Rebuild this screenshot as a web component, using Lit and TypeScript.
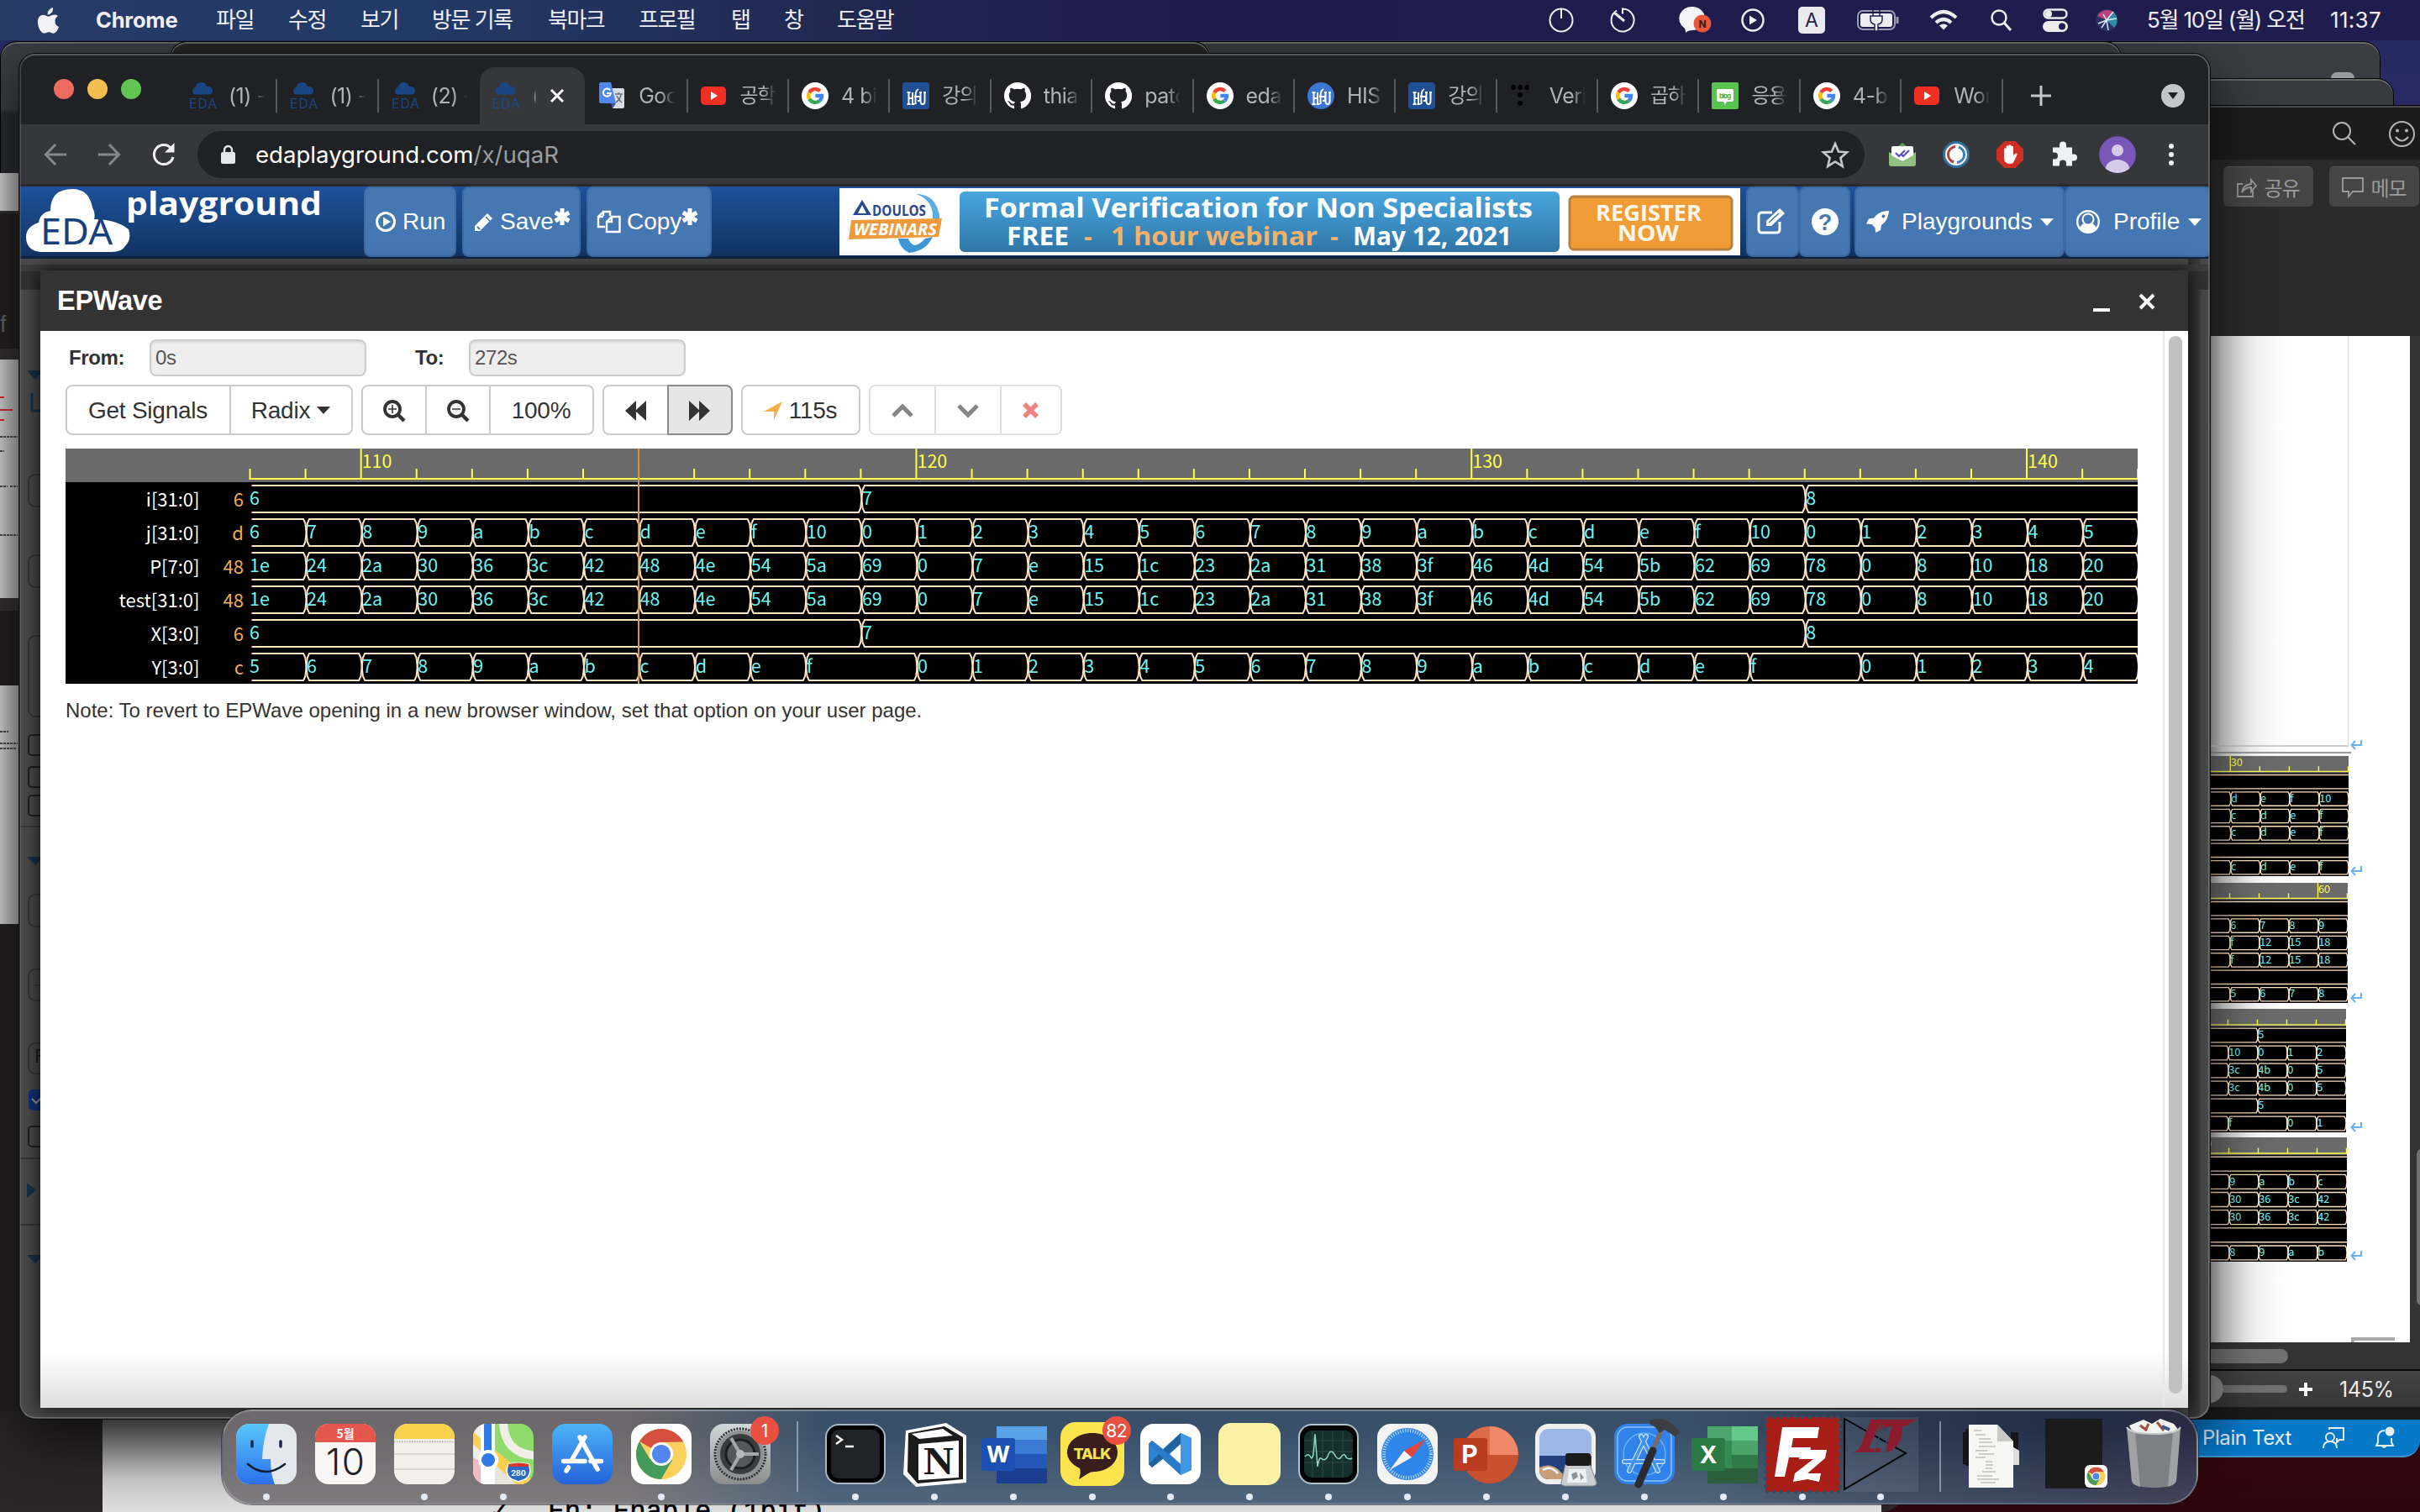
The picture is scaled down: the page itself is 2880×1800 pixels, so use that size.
import { LitElement, html, svg, css, nothing, TemplateResult } from "lit";
import { customElement, property } from "lit/decorators.js";

/* ---------- shared waveform drawing ---------- */

interface WaveRow {
  name?: string;
  value?: string;
  cells: string; // space separated, "." keeps the previous value
}

const PITCH = 66.08;

function waveRow(row: WaveRow, index: number, x0: number, right: number, lw: number, fs: number) {
  const cells = row.cells.split(" ");
  const top = 44 + index * 40;
  const mid = top + 16;
  const bot = top + 32;
  const parts: TemplateResult[] = [];
  let i = 0;
  while (i < cells.length) {
    let j = i + 1;
    while (j < cells.length && cells[j] === ".") j++;
    const a = x0 + i * PITCH + 1;
    const b = x0 + j * PITCH + 1;
    const first = i === 0;
    const last = j === cells.length && j - i > 2;
    const l = first ? `M${a + 1} ${top}` : `M${a} ${mid}L${a + 1.2} ${top + 5}L${a + 3.5} ${top}`;
    const r = last ? `H${right}` : `H${b - 3.5}L${b - 1.2} ${top + 5}L${b} ${mid}`;
    const l2 = first ? `M${a + 1} ${bot}` : `M${a} ${mid}L${a + 1.2} ${bot - 5}L${a + 3.5} ${bot}`;
    const r2 = last ? `H${right}` : `H${b - 3.5}L${b - 1.2} ${bot - 5}L${b} ${mid}`;
    parts.push(svg`<path d="${l}${r}${l2}${r2}" fill="none" stroke="#ffe4c4" stroke-width=${lw}></path>
      <text x=${first ? a - 1.5 : a + 0.5} y=${top + 23} font-size=${fs} fill="#6ff5f5">${cells[i]}</text>`);
    i = j;
  }
  return parts;
}

function ruler(x0: number, count: number, labels: Record<number, string>, right: number, lw: number, fs: number) {
  const ticks = [];
  for (let i = 0; i <= count; i++) {
    const x = x0 + i * PITCH;
    const label = labels[i];
    ticks.push(svg`<path d="M${x} ${label ? 0 : 24}V37" stroke="#ffff4b" stroke-width=${lw}></path>
      ${label ? svg`<text x=${x + 1} y="23" font-size=${fs} fill="#ffff4b">${label}</text>` : nothing}`);
  }
  return svg`<rect width=${right} height="40" fill="#6a6a6a"></rect>
    <path d="M${x0 - 1} 36H${right}" stroke="#ffff4b" stroke-width=${lw}></path>${ticks}`;
}

@customElement("wave-view")
class WaveView extends LitElement {
  @property({ attribute: false }) rows: WaveRow[] = [];
  @property({ attribute: false }) labels: Record<number, string> = {};
  @property({ type: Number }) x0 = 219.5;
  @property({ type: Number }) full = 2466;
  @property({ type: Number }) lw = 2;
  @property({ type: Number }) fs = 21.5;
  @property({ type: Number }) cursor = 0;
  @property({ type: Number }) count = 34;

  static styles = css`
    :host { display: block; }
    svg { display: block; width: 100%; height: 100%; background: #000; }
    text { font-family: "Noto Sans CJK KR", sans-serif; }
  `;

  render() {
    return html`<svg viewBox="0 0 ${this.full} 280" preserveAspectRatio="none">
      ${ruler(this.x0, this.count, this.labels, this.full, this.lw, this.fs)}
      ${this.rows.map((r, i) => svg`
        ${r.name ? svg`<text x="159.500" y=${68.5 + i * 40} font-size="22" text-anchor="end" fill="#fff">${r.name}</text>` : nothing}
        ${r.value ? svg`<text x="212" y=${68.5 + i * 40} font-size="22" text-anchor="end" fill="#f0ad4e">${r.value}</text>` : nothing}
        ${waveRow(r, i, this.x0, this.full, this.lw, this.fs)}`)}
      ${this.cursor ? svg`<path d="M${this.cursor} 0V280" stroke="#d9963a" stroke-width="2"></path>` : nothing}
    </svg>`;
  }
}

const hold = (v: string, n: number) => v + " .".repeat(n - 1);
const P_CELLS = "1e 24 2a 30 36 3c 42 48 4e 54 5a 69 0 7 e 15 1c 23 2a 31 38 3f 46 4d 54 5b 62 69 78 0 8 10 18 20";
const I_CELLS = `${hold("6", 11)} ${hold("7", 17)} ${hold("8", 6)}`;
const MAIN_ROWS: WaveRow[] = [
  { name: "i[31:0]", value: "6", cells: I_CELLS },
  { name: "j[31:0]", value: "d", cells: "6 7 8 9 a b c d e f 10 0 1 2 3 4 5 6 7 8 9 a b c d e f 10 0 1 2 3 4 5" },
  { name: "P[7:0]", value: "48", cells: P_CELLS },
  { name: "test[31:0]", value: "48", cells: P_CELLS },
  { name: "X[3:0]", value: "6", cells: I_CELLS },
  { name: "Y[3:0]", value: "c", cells: "5 6 7 8 9 a b c d e f . 0 1 2 3 4 5 6 7 8 9 a b c d e f . 0 1 2 3 4" },
];

const strip = (i: string, j: string, p: string, y: string): WaveRow[] =>
  [i, j, p, p, i, y].map((cells) => ({ cells }));
const STRIPS = [
  { cls: "s1", labels: { 1: "30" }, full: 443, rows: strip("1 . . . .", "c d e f 10", "b c d e f", "b c d e f") },
  { cls: "s2", labels: { 4: "60" }, full: 442, rows: strip("3 . . . .", "5 6 7 8 9", "c f 12 15 18", "4 5 6 7 8") },
  { cls: "s3", labels: {}, full: 438, rows: strip("4 . 5 . .", "f 10 0 1 2", "36 3c 4b 0 5", "e f . 0 1") },
  { cls: "s4", labels: { 0: "10" }, full: 440, rows: strip("6 . . . .", "8 9 a b c", "2a 30 36 3c 42", "7 8 9 a b") },
];

/* ---------- icons ---------- */

const ic = (w: number, h: number, body: TemplateResult, vb = `0 0 ${w} ${h}`) =>
  html`<svg width=${w} height=${h} viewBox=${vb} style="display:block;overflow:visible;flex:none">${body}</svg>`;

const googleG = svg`<circle cx="16" cy="16" r="16" fill="#fff"/>
  <g fill="none" stroke-width="4.4"><path d="M9.2 12.1A8 8 0 0 1 21.8 10.4" stroke="#ea4335"/><path d="M9.2 12.1A8 8 0 0 0 9.2 19.9" stroke="#fbbc05"/><path d="M9.2 19.9A8 8 0 0 0 21 22.2" stroke="#34a853"/><path d="M21 22.2A8 8 0 0 0 24 16H16.4" stroke="#4285f4"/></g>`;
const edaFav = svg`<path d="M7 14.5q-3-1-3-4 0-3.500 4-4.500Q8.500 0 14 0q5.500 0 7 5 7 0 7 5 0 4-4 4.500z" fill="#1b4684"/>
  <text x="0" y="31" font-family="Inter, sans-serif" font-size="15.500" textLength="33" fill="#1b4684">EDA</text>`;
const youtube = svg`<rect y="5" width="30" height="22" rx="5" fill="#f03022"/><path d="M12 11v10l8-5z" fill="#fff"/>`;
const crest = (round: boolean) => svg`<rect width="32" height="32" rx=${round ? 16 : 4} fill=${round ? "#3a76d2" : "#1f5094"}/>
  <g fill="none" stroke="#fff" stroke-width="2"><path d="M7.500 12v14M12 12v14M7.500 19h4.500M5.500 12h4M5.500 26h4M10.500 26h4M19 8q-3.500 2-3.500 8v10M14 17h7v5h-3M21.500 12v10q0 4 2.500 4t2.500-4V12M20 12h3M25 12h3"/></g>`;
const github = svg`<path fill="#fff" d="M16 0a16 16 0 0 0-5 31.200c.8.100 1.100-.4 1.100-.8v-3c-4.500 1-5.400-1.900-5.400-1.900-.7-1.800-1.800-2.300-1.800-2.300-1.400-1 .1-1 .1-1 1.600.1 2.500 1.700 2.500 1.700 1.400 2.400 3.700 1.700 4.600 1.300.2-1 .6-1.700 1-2.100-3.600-.4-7.300-1.800-7.300-7.900 0-1.700.6-3.200 1.700-4.300-.2-.4-.7-2 .1-4.200 0 0 1.400-.4 4.400 1.600a15 15 0 0 1 8 0c3-2 4.400-1.600 4.400-1.600.9 2.200.3 3.800.2 4.200 1 1.100 1.600 2.600 1.600 4.300 0 6.200-3.700 7.500-7.300 7.900.6.500 1.100 1.500 1.100 3v4.300c0 .4.300.9 1.100.8A16 16 0 0 0 16 0z"/>`;
const translate = svg`<path d="M12 7h16a2 2 0 0 1 2 2v20a2 2 0 0 1-2 2H16z" fill="#d8dce2"/><path d="M0 2a2 2 0 0 1 2-2h12l6 25H2a2 2 0 0 1-2-2z" fill="#5087ec"/><path d="M14 25h6l-4 6z" fill="#3850b0"/><path d="M13.300 9.500A4.600 4.600 0 1 0 14 13h-5" fill="none" stroke="#fff" stroke-width="2"/><path d="M19 14h9M23.500 12v2M26 15q-1 5-6 9M21 16q2 5 6 8" stroke="#66707c" stroke-width="1.500" fill="none"/>`;
const dotsT = svg`<g fill="#000"><circle cx="4" cy="6" r="3"/><circle cx="12" cy="6" r="3"/><circle cx="20" cy="6" r="3"/><circle cx="12" cy="15" r="3"/><circle cx="12" cy="25" r="3"/></g>`;
const blog = svg`<rect width="32" height="32" rx="2" fill="#5ac24e"/><path d="M8 8h16q2 0 2 2v11q0 2-2 2h-6l-2 4-2-4H8q-2 0-2-2V10q0-2 2-2z" fill="#fff"/><text x="9" y="18.500" font-family="Inter" font-weight="700" font-size="8" textLength="14" fill="#4cae42">blog</text>`;
const star6 = ic(18, 20, svg`<path d="M9 0v20M.8 5l16.400 10M17.200 5 .8 15" stroke="#fff" stroke-width="5"/>`);

const caret = ic(16, 9, svg`<path d="M0 0h16l-8 9z" fill="currentColor"/>`);
const chromeLogo = svg`<circle cx="36" cy="36" r="30" fill="#fbd05c"/>
  <path d="M36 36 10 21A30 30 0 0 1 62 21L62 22H36z" fill="#d5503f"/><path d="M10 21a30 30 0 0 0 26 45L49.500 43 36 36 22.500 42z" fill="#459b5b"/><path d="M62 21.500A30 30 0 0 1 36 66L49 43.500 36 22z" fill="#fbd05c"/><circle cx="36" cy="36" r="14" fill="#fff"/><circle cx="36" cy="36" r="11" fill="#5286ec"/>`;

interface Tab { icon: TemplateResult; text: string; active?: boolean; sep?: boolean; ko?: boolean }
const TABS: Tab[] = [
  { icon: edaFav, text: "(1) -", sep: true },
  { icon: edaFav, text: "(1) -", sep: true },
  { icon: edaFav, text: "(2) -" },
  { icon: edaFav, text: "(", active: true },
  { icon: translate, text: "Goo", sep: true },
  { icon: youtube, text: "공학", sep: true, ko: true },
  { icon: googleG, text: "4 bi", sep: true },
  { icon: crest(false), text: "강의", sep: true, ko: true },
  { icon: github, text: "thia", sep: true },
  { icon: github, text: "patc", sep: true },
  { icon: googleG, text: "eda", sep: true },
  { icon: crest(true), text: "HIS", sep: true },
  { icon: crest(false), text: "강의", sep: true, ko: true },
  { icon: dotsT, text: "Veri", sep: true },
  { icon: googleG, text: "곱하", sep: true, ko: true },
  { icon: blog, text: "응용", sep: true, ko: true },
  { icon: googleG, text: "4-b", sep: true },
  { icon: youtube, text: "Wor", sep: true },
];

/* ---------- dock icons (72 x 72) ---------- */

const tile = (fill: string) => svg`<rect width="72" height="72" rx="16" fill=${fill}/>`;
const DOCK_A: { art: TemplateResult; dot?: boolean; badge?: string }[] = [
  { dot: true, art: svg`<rect width="72" height="72" rx="16" fill="#e3e7ee"/><path d="M16 0H39Q32 18 31 42H41Q41 60 46 72H16A16 16 0 0 1 0 56V16A16 16 0 0 1 16 0z" fill="url(#gBlue)"/><path d="M19 21v6M53 21v6" stroke="#1b2a44" stroke-width="3.500" stroke-linecap="round"/><path d="M14 48q21 18 44 0" fill="none" stroke="#14202e" stroke-width="2.600" stroke-linecap="round"/>` },
  { art: svg`${tile("#f8f7f5")}<path d="M0 22V16A16 16 0 0 1 16 0H56A16 16 0 0 1 72 16V22z" fill="#e5574c"/><text x="36" y="17" text-anchor="middle" font-family="Noto Sans CJK KR" font-weight="700" font-size="14" fill="#fff">5월</text><text x="36" y="61" text-anchor="middle" font-family="Inter" font-weight="300" font-size="44" textLength="46" fill="#222">10</text>` },
  { dot: true, art: svg`${tile("#f1f0ec")}<path d="M0 18V16A16 16 0 0 1 16 0H56A16 16 0 0 1 72 16V18z" fill="#f9d14c"/><path d="M0 21.500H72" stroke="#b0ada6" stroke-width="1.500" stroke-dasharray="1.500 1.500"/><path d="M0 36H72M0 54H72" stroke="#cfcdc8" stroke-width="1.500"/>` },
  { dot: true, art: svg`<clipPath id="mc"><rect width="72" height="72" rx="16"/></clipPath><g clip-path="url(#mc)"><rect width="72" height="72" fill="#8fdc6c"/><path d="M0 0h12v72H0z" fill="#efeeea"/><path d="M0 40l14 8v24H0z" fill="#f3b8c4"/><path d="M26 42l46 30H26z" fill="#e7e4dc"/><path d="M0 10 72 68V80H60L0 24z" fill="#fbce4e"/><path d="M36-4q0 40 40 42" fill="none" stroke="#f0eee6" stroke-width="10"/><path d="M9 0h17v72H9z" fill="#fff"/><path d="M13 0h9v42h-9z" fill="#2f7be8"/><circle cx="18" cy="43" r="12" fill="#fff"/><circle cx="18" cy="43" r="8" fill="#2f7be8"/></g><path d="M42 48q12-3 24 0 5 12-4 18l-8 3-8-3q-9-6-4-18z" fill="#2b6ac4" stroke="#fff" stroke-width="1.500"/><path d="M42 48q12-3 24 0v3H42z" fill="#d9372c"/><text x="54" y="62" text-anchor="middle" font-family="Inter" font-weight="700" font-size="9" fill="#fff">280</text>` },
  { art: svg`${tile("url(#gStore)")}<g stroke="#fff" stroke-width="5.500" stroke-linecap="round"><path d="M39 16 24 42M33 16 54 54M13.500 44.500H39M46 44.500H58.500M19.500 52 17 56"/></g>` },
  { dot: true, art: svg`${tile("#fff")}${chromeLogo}` },
  { badge: "1", art: svg`${tile("url(#gGray)")}<circle cx="36" cy="36" r="30" fill="none" stroke="#2b2d2f" stroke-width="3" stroke-dasharray="2 1.500"/><circle cx="36" cy="36" r="26" fill="#3a3c3e" stroke="#8d9194" stroke-width="4"/><circle cx="36" cy="36" r="17" fill="#55585a" stroke="#1d1e20" stroke-width="3"/><path d="M36 36H58M36 36 25 17M36 36 25 55" stroke="#a4a8aa" stroke-width="4"/><circle cx="36" cy="36" r="5" fill="#b5b9bb"/>` },
];
const DOCK_B: { art: TemplateResult; dot?: boolean; badge?: string }[] = [
  { dot: true, art: svg`${tile("#aab8c4")}<rect x="2" y="2" width="68" height="68" rx="14" fill="#000"/><rect x="7" y="7" width="58" height="58" rx="9" fill="#222325"/><path d="M13 14l7 5-7 5M24 27h10" stroke="#fff" stroke-width="2.500" fill="none"/>` },
  { dot: true, art: svg`<path d="M2 8 50-1l24 15v56L14 75-1 60z" fill="#fff"/><path d="M5 11 48 3l22 13v50l-54 5L4 57z" fill="#1c1c1c"/><path d="M9 12 46 6l12 8-40 4z" fill="#fff"/><path d="M17 24l48-4v44l-48 3z" fill="#fff"/><text x="41" y="60" text-anchor="middle" font-family="Liberation Serif" font-weight="700" font-size="46" textLength="36" lengthAdjust="spacingAndGlyphs" fill="#1a1a1a">N</text>` },
  { dot: true, art: svg`<path d="M16 3H76V20H16z" fill="#5aa3e8"/><path d="M16 19H76V37H16z" fill="#3c7bd4"/><path d="M16 36H76V54H16z" fill="#2358b8"/><path d="M16 53H76V71H16z" fill="#1a3e90"/><rect x="-2" y="17" width="40" height="39" rx="3" fill="#1c50b4"/><text x="18" y="46" text-anchor="middle" font-family="Inter" font-weight="700" font-size="27" fill="#fff">W</text>` },
  { dot: true, badge: "82", art: svg`<rect x="-2" y="-2" width="76" height="76" rx="18" fill="#fbe44d"/><path d="M36 11c17 0 30 10 30 23S53 57 38 57c-5 0-8 3-18 9 2-6 2-10 1-13C12 49 6 42 6 34c0-13 13-23 30-23z" fill="#3a1d1d"/><text x="36" y="42" text-anchor="middle" font-family="Inter" font-weight="800" font-size="18" textLength="45" fill="#fbe44d">TALK</text>` },
  { dot: true, art: svg`${tile("#fff")}<path d="M48 11 61 17V55L48 61 27 42 14 52 10 48V24l4-4 13 10zM48 24 35 36 48 48z" fill="#2d86d3" fill-rule="evenodd"/><path d="M10 48 48 11v13L14 52z" fill="#22639f"/><path d="M10 24l4-4 34 28v13z" fill="#2a7cca"/><path d="M48 11 61 17V55L48 61z" fill="#3f97e6"/>` },
  { dot: true, art: svg`<rect x="-1" y="-1" width="74" height="74" rx="15" fill="#fbf1a4"/>` },
  { dot: true, art: svg`${tile("#b4c4cc")}<rect x="2" y="2" width="68" height="68" rx="14" fill="#000"/><rect x="7" y="8" width="58" height="56" rx="9" fill="#14302c"/><path d="M17 8v56M29 8v56M41 8v56M53 8v56M7 20h58M7 33h58M7 46h58" stroke="#2c4e47" stroke-width="1"/><path d="M8 39q4-5 7 1 1 3 3-3l2-25 3 39q2-12 4-10 6 5 9-5 3-6 7 0 3 7 7 5 5-8 7-1 3 3 7 1" fill="none" stroke="#8fd8c4" stroke-width="1.500"/>` },
  { dot: true, art: svg`${tile("#f3f3f3")}<circle cx="36" cy="36" r="31" fill="#2f86ea"/><circle cx="36" cy="36" r="28" fill="none" stroke="#cfe4fb" stroke-width="4" stroke-dasharray="1 2"/><path d="M58 18 41 40 32 32z" fill="#e5443b"/><path d="M15 55 32 32 41 40z" fill="#f3f3f3"/>` },
  { dot: true, art: svg`<circle cx="40" cy="37" r="34" fill="#c9512f"/><path d="M40 3a34 34 0 0 1 34 34H40z" fill="#f0886a"/><path d="M40 3a34 34 0 0 0-34 34H40z" fill="#dd6a48"/><rect x="-3" y="17" width="40" height="39" rx="3" fill="#b93b20"/><text x="16" y="47" text-anchor="middle" font-family="Inter" font-weight="700" font-size="30" fill="#fff">P</text>` },
  { dot: true, art: svg`${tile("#efefef")}<rect x="5" y="6" width="62" height="60" rx="11" fill="#9db8e6"/><path d="M5 38H67V55A11 11 0 0 1 56 66H16A11 11 0 0 1 5 55z" fill="#24407c"/><path d="M5 52q12-6 22 2l12 12H16A11 11 0 0 1 5 55z" fill="#c6a07c"/><path d="M9 55q10-6 18 4" stroke="#fff" stroke-width="2.500" fill="none"/><path d="M36 48h29l8 22q0 4-5 4H36q-5 0-5-4z" fill="#c9cdd0" stroke="#83888c"/><path d="M40 54h20l2 16H38z" fill="#edf1f4"/><path d="M43 60l6-3 2 6-6 4zM53 58l5 6-4 3z" fill="#8d949b"/><rect x="36" y="35" width="30" height="15" rx="3" fill="#1a1a1a"/>` },
  { dot: true, art: svg`${tile("#2f83ea")}<rect x="4" y="4" width="64" height="64" rx="12" fill="none" stroke="#8fc2f7" stroke-width="1.500"/><circle cx="36" cy="36" r="25" fill="none" stroke="#6db0f5" stroke-width="1.500"/><g stroke="#cbe3fb" stroke-width="6" stroke-linecap="round"><path d="M38 15 18 56M32 15 52 56M12 45H58"/></g><g stroke="#3f92ee" stroke-width="3.400" stroke-linecap="round"><path d="M38 15 18 56M32 15 52 56M12 45H58"/></g><path d="M56 8 46 32" stroke="#6b6e73" stroke-width="6"/><path d="M46 32 29 72" stroke="#2a2c2f" stroke-width="9" stroke-linecap="round"/><path d="M42-4q16-5 26 4l8 7 2 4-6 4-12-8-6 4-5-7q-4-2-7-4z" fill="#3b3d41"/>` },
  { dot: true, art: svg`<path d="M17 3H47V20H17z" fill="#4ca56c"/><path d="M46 3H77V20H46z" fill="#63c88a"/><path d="M17 20H47V54H17z" fill="#348a52"/><path d="M46 20H77V37H46z" fill="#4ba468"/><path d="M46 37H77V54H46z" fill="#2f7a46"/><path d="M17 53H77V71H17z" fill="#2a5f3a"/><rect x="-2" y="17" width="40" height="39" rx="3" fill="#2c7a43"/><text x="18" y="47" text-anchor="middle" font-family="Inter" font-weight="700" font-size="28" fill="#fff">X</text>` },
  { dot: true, art: svg`<rect x="-8" y="-8" width="89" height="89" fill="#a81e17"/><rect x="-8" y="-8" width="89" height="89" fill="none" stroke="#3d4a5e" stroke-width="4" stroke-dasharray="3.500 5"/><path d="M12 4H56L54 17H25L23 28H46L44 40H20L15 63H3z" fill="#fff"/><path d="M34 31H65L63 41 42 59H58L56 69 42 66 25 69 27 59 49 42H32z" fill="#fff"/>` },
  { dot: true, art: svg`<rect x="-7" y="-8" width="88" height="89" fill="#fff" opacity=".08"/><path d="M-7-6 66 35-7 78z" fill="none" stroke="#000" stroke-width="2"/><path d="M24-5H38L22 28Q24 31 34 28L37 34H4Q12 31 15 20z" fill="#8a1c2e"/><path d="M38-5H80Q72-2 66 3H62Q62 18 56 25 50 33 42 34L49 3Q41 3 34 9z" fill="#8a1c2e"/><path d="M40 1 28 34M48 3 40 34" stroke="#3d4a5e" stroke-width="1.500"/>` },
];
const DOCK_C: { art: TemplateResult }[] = [
  { art: svg`<path d="M-3 10h8v38h-8zM0 6h8v44H0z" fill="#161616"/><rect x="54" y="10" width="9" height="20" fill="#161616"/><path d="M54 26l10 6v17H54z" fill="#ddd"/><path d="M4 1H38L57 21V76H4z" fill="#f6f6f4"/><path d="M38 1v20h19z" fill="#c9c9c6"/><path d="M10 8h9M12 13h12M16 18h14M16 22h16M16 27h20M12 32h14M16 36h18M12 40h12M24 45h8M24 49h9M24 53h8M20 57h16M14 62h18M14 66h26M18 70h18" stroke="#c0c0bc" stroke-width="1.400"/>` },
  { art: svg`<rect x="1" y="-6" width="68" height="83" fill="#1b1b1b"/><rect x="48" y="49" width="27" height="27" rx="6" fill="#fff"/><g transform="translate(48.500 49.500) scale(.36)">${chromeLogo}</g>` },
  { art: svg`<path d="M7 2 24-5 34 0 44-6 60 0 66 8 40 16 12 12z" fill="#f2f2ee"/><path d="M20 2l8 6M40-2l8 10M30 0l-4 8" stroke="#a35040" stroke-width="3"/><path d="M46 3l9 4" stroke="#345a90" stroke-width="4"/><path d="M4 4 10 68q1 8 26 8t27-8L68 4q-8 8-32 8T4 4z" fill="#7c8082"/><path d="M4 4 10 68q1 5 10 7L14 9zM68 4 63 68q-2 5-10 7l6-66z" fill="#a9adae" opacity=".75"/><path d="M4 4q4 8 32 8T68 4" fill="none" stroke="#c8cbcc" stroke-width="2"/>` },
];

/* ---------- page ---------- */

@customElement("app-root")
class AppRoot extends LitElement {
  static styles = css`
    :host { display: block; position: relative; width: 2880px; height: 1800px; overflow: hidden;
      font-family: "Liberation Sans", "Noto Sans CJK KR", sans-serif;
      background: linear-gradient(180deg, #24285e 0, #2b2b66 150px, #31102c 1200px, #36070f 1700px, #2e060d 1800px); }
    * { box-sizing: border-box; }
    .layer { position: absolute; }
    .sys { font-family: Inter, "Noto Sans CJK KR", sans-serif; }

    .menubar { left: 0; top: 0; width: 2880px; height: 48px; display: flex; align-items: center; justify-content: space-between;
      background: linear-gradient(90deg, #263a66 0, #223a66 500px, #212850 1000px, #1f1c4c 1400px, #1f1d4d 2880px);
      color: #eeeef3; font-size: 26px; line-height: 1; padding: 0 37px 0 44px; z-index: 2; }
    .menus { display: grid; grid-template-columns: 70px 143px 86px 86px 85px 138px 108px 110px 63px 63px 80px; align-items: center; white-space: nowrap; letter-spacing: -1.500px; }
    .menus b { font-weight: 700; font-size: 25.500px; letter-spacing: -.2px; }
    .status { display: flex; align-items: center; white-space: nowrap; flex: none; }
    .cell { display: flex; justify-content: center; flex: none; }
    .date { width: 218px; flex: none; letter-spacing: -1.200px; } .time { width: 70px; flex: none; letter-spacing: .3px; }
    .sp { width: 35px; flex: none; }

    .win { border: 1px solid #000; box-shadow: inset 0 2px 0 #66686a; border-radius: 20px 20px 0 0; }
    .w1 { left: 0; top: 49px; width: 2833px; height: 200px; background: linear-gradient(#3a3e42 0 80px, #292b2f 86px); }
    .w2 { left: 1400px; top: 49px; width: 1125px; height: 100px; background: #3a3b3d; }
    .w3 { left: 202px; top: 49px; width: 1238px; height: 100px; background: #252525; }
    .w4 { left: 2300px; top: 93px; width: 549px; height: 100px; background: #373b3d; }
    .bump { left: 2774px; top: 86px; width: 28px; height: 7px; border-radius: 14px 14px 0 0; background: #999b9d; }

    .strip { left: 0; top: 206px; width: 24px; height: 1594px; display: flex; flex-direction: column; background: #252122; }
    .paper { background: linear-gradient(90deg, #d8d8d8, #a9a9a9); flex: none; }
    .bar { background: #353133; flex: none; }
    .dark { flex: none; background: #242021; color: #666; font-size: 27px; line-height: 32px; }

    .lower { left: 0; top: 1680px; width: 2268px; height: 120px; display: flex; background: #2a2628; border-radius: 0 0 30px 0; overflow: hidden; }
    .lower .sheet { margin-left: 122px; width: 2117px; background: linear-gradient(#555 0, #8d8d8d 30px, #c8c8c8 80px, #dedede 120px); padding: 99px 0 0 462px; display: flex; gap: 49px; font: 32.300px/44px "Liberation Mono", monospace; color: #000; white-space: pre; overflow: hidden; -webkit-text-stroke: .5px #000; }

    .word { left: 2560px; top: 125px; width: 330px; height: 1550px; background: #333; border: 1px solid #000; border-left: 0; box-shadow: inset 0 2px 0 #555; display: flex; flex-direction: column; }
    .wtitle { height: 64px; background: #1c1c1c; border-top: 2px solid #4d4d4d; display: flex; align-items: center; gap: 39px; padding-left: 216px; color: #b0b0b0; flex: none; }
    .wribbon { height: 210px; background: #2a2a2a; flex: none; display: flex; gap: 19px; padding: 8px 0 0 86px; }
    .wbtn { width: 107px; height: 48px; background: #454545; border-top: 1px solid #5a5a5a; border-radius: 6px; display: flex; align-items: center; justify-content: center; gap: 8px; font: 24px/1 "Noto Sans CJK KR", sans-serif; letter-spacing: -1px; color: #9b9b9b; flex: none; white-space: nowrap; }
    .wdoc { height: 1198px; width: 308px; flex: none; position: relative; background: linear-gradient(90deg, #a6a6a6 68px, #d9d9d9 84px, #f4f4f4 120px, #fff 165px); display: flex; flex-direction: column; }
    .frame { width: 235px; height: 489px; border-right: 1px solid #ddd; border-bottom: 2px solid #ccc; flex: none; }
    .frame2 { width: 238px; height: 8px; border-bottom: 2px solid #999; margin-bottom: 3px; flex: none; }
    .ret { position: absolute; left: 237px; }
    .s1 { width: 235px; height: 143px; } .s2 { width: 234px; height: 143px; margin-top: 8px; }
    .s3 { width: 232px; height: 147px; margin-top: 7px; } .s4 { width: 233px; height: 148px; margin-top: 6px; }
    .nub { margin: auto 0 0 238px; width: 52px; height: 6px; border-top: 4px solid #a8a8a8; border-left: 4px solid #a8a8a8; }
    .wside { position: absolute; left: 316px; top: 1242px; width: 12px; height: 186px; background: #707070; border-radius: 6px; }
    .hscroll { height: 32px; flex: none; display: flex; align-items: center; } .hscroll i { width: 163px; height: 17px; border-radius: 9px; background: #717171; }
    .wstatus { flex: none; height: 45px; border-top: 2px solid #0a0a0a; background: linear-gradient(#434343, #373737); display: flex; align-items: center; color: #ececec; font-size: 25px; letter-spacing: -.3px; }
    .knob { width: 86px; height: 33px; border-radius: 17px; background: #8e8e8e; } .track { width: 76px; height: 9px; background: #707070; border-radius: 0 5px 5px 0; }
    .plus { width: 16px; margin: 0 32px 0 14px; }

    .vsc { left: 2268px; top: 1675px; width: 612px; height: 60px; background: #1a1a1a; border-radius: 0 0 20px 0; display: flex; align-items: flex-end; overflow: hidden; }
    .vbar { flex: 1; height: 45px; background: #0578c8; border-bottom: 2px solid #3f95d4; display: flex; align-items: center; padding-left: 353px; color: #e6eef5; font-size: 24px; letter-spacing: -.4px; border-radius: 0 0 20px 0; }
    .vbar span { width: 143px; white-space: nowrap; flex: none; }
    .vbar .gap { width: 36px; }

    .chrome { left: 22px; top: 63px; width: 2609px; height: 1627px; border: 2px solid #0c0c0c; border-radius: 20px; background: #4a4a4a; overflow: hidden; display: flex; flex-direction: column;
      box-shadow: inset 0 0 0 2px #626466; }
    .glow { left: 22px; top: 63px; width: 2609px; height: 1627px; border-radius: 20px; box-shadow: 0 24px 60px 6px rgba(0,0,0,.55); }
    .rim { left: 23px; top: 64px; width: 2607px; height: 1625px; border-radius: 19px; border: 2px solid rgba(150,152,155,.5); border-left-color: rgba(150,152,155,.3); pointer-events: none; }
    .tabs { height: 83px; background: #202124; display: flex; align-items: flex-end; flex: none; padding-left: 40px; }
    .lights { display: flex; gap: 16px; width: 146px; height: 84px; align-items: center; flex: none; }
    .lights i { width: 24px; height: 24px; border-radius: 50%; flex: none; }
    .lights .r { background: #ed6a5e; } .lights .y { background: #f5bf4f; } .lights .g { background: #61c554; }
    .tab { width: 120.400px; height: 68px; display: flex; align-items: center; padding-left: 15px; position: relative; flex: none; }
    .tab.on { width: 125px; background: #36373a; border-radius: 18px 18px 0 0; margin-right: 2px; }
    .fav { width: 32px; height: 32px; flex: none; margin-right: 15px; }
    .cap { width: 43px; overflow: hidden; white-space: nowrap; font-size: 25px; line-height: 34px; color: #b0b2b5; letter-spacing: -.5px;
      -webkit-mask-image: linear-gradient(90deg, #000 62%, transparent); mask-image: linear-gradient(90deg, #000 62%, transparent); }
    .cap.ko { font-size: 24px; letter-spacing: -1.500px; }
    .tab.on .cap { width: 5px; }
    .close { margin-left: 17px; }
    .line { width: 2px; height: 40px; background: #56585c; margin-left: auto; }
    .plusb { width: 90px; display: flex; justify-content: center; height: 68px; align-items: center; flex: none; }
    .chev { margin-left: auto; margin-right: 29px; height: 68px; display: flex; align-items: center; }

    .tool { height: 74px; background: #36373a; border-bottom: 3px solid #2a2b2d; display: flex; align-items: center; flex: none; padding-left: 26px; }
    .tool .cell { height: 72px; align-items: center; }
    .omni { width: 1984px; height: 56px; border-radius: 28px; background: #202124; margin: 0 25px 0 24px; display: flex; align-items: center; padding-left: 28px; font-size: 27.600px; color: #fff; flex: none; }
    .omni span { color: #9a9da0; } .omni p { margin: 0 0 0 24px; flex: 1; }
    .omni .star { margin-right: 21px; }

    .nav { height: 86px; flex: none; background: linear-gradient(#1d519a, #123463); border-bottom: 3px solid #0e2544; display: flex; color: #fff; font-size: 28px; }
    .logo { width: 408px; flex: none; }
    .btn { height: 84px; background: #4578b2; border: 2px solid #3c6ca4; border-radius: 8px; display: flex; align-items: center; padding-left: 12px; flex: none; white-space: nowrap; }
    .btn .ast { align-self: flex-start; margin-top: 24px; }
    .run { width: 110px; gap: 8px; margin-left: 1px; } .save { width: 141px; gap: 7px; margin-left: 7px; } .copy { width: 149px; gap: 7px; margin-left: 7px; padding-left: 10px; }
    .save .ast { margin-left: -6px; } .copy .ast { margin-left: -6px; }
    .edit { width: 63px; padding-left: 11px; } .help { width: 61px; padding-left: 13px; }
    .play { width: 250px; margin-left: 5px; gap: 15px; } .prof { width: 175px; gap: 16px; }
    .play .car, .prof .car { margin-left: -6px; }
    .banner { width: 1072px; height: 80px; margin: 2px 7px 0 152px; background: #fff; flex: none; display: block; }

    .page { flex: 1; display: flex; position: relative; background: #4a4a4a; }
    .backhead { position: absolute; left: 0; top: 7px; width: 2606px; height: 30px; border-top: 8px solid #3c3c3c; background: #323232; }
    .left { width: 24px; overflow: hidden; } .right { flex: 1; background: linear-gradient(90deg, #2e2e2e, #3a3a3a 14px, #474747 15px, #4a4a4a); }
    .modal { position: relative; width: 2556px; height: 1354px; margin-top: 14px; flex: none; background: #fff; box-shadow: 0 0 20px 2px rgba(0,0,0,.75); display: flex; flex-direction: column; }
    .mhead { height: 72px; background: #333; flex: none; display: flex; align-items: center; color: #fff; font-size: 32.500px; font-weight: 700; padding: 1px 39px 0 20px; letter-spacing: -.3px; }
    .mhead svg { margin-left: 34px; } .mhead .min { margin: 20px 0 0 auto; }
    .mbody { flex: 1; display: flex; background: linear-gradient(#fff 1215px, #dedede 1282px); }
    .main { width: 2526px; padding: 10px 0 0 30px; color: #333; }
    .sb { width: 30px; border-left: 2px solid #e8e8e8; padding: 6px 0 17px 5px; display: flex; } .sb i { width: 16px; border-radius: 8px; background: #c1c1c1; }
    .range { display: flex; align-items: center; font-size: 24px; font-weight: 700; height: 44px; letter-spacing: -.4px; }
    .range label { width: 100px; padding-left: 4px; } .range label.b { width: 122px; padding-left: 58px; }
    .in { width: 258px; height: 44px; border: 2px solid #ccc; border-radius: 8px; background: #eee; box-shadow: inset 0 2px 2px rgba(0,0,0,.08); font-weight: 400; color: #555; display: flex; align-items: center; padding-left: 5px; }
    .groups { display: flex; gap: 10px; margin-top: 10px; }
    .grp { display: flex; height: 60px; border: 2px solid #ccc; border-radius: 8px; overflow: hidden; font-size: 28px; flex: none; }
    .grp > div { display: flex; align-items: center; justify-content: center; gap: 8px; border-left: 2px solid #ccc; white-space: nowrap; letter-spacing: -.25px; padding: 1px 1px 0 0; }
    .grp > div:first-child { border-left: 0; }
    .off { border-color: #e0e0e0; } .grp.off > div { border-color: #e0e0e0; }
    .grp.act { overflow: visible; } .grp .pressed { background: #e6e6e6; margin: -2px -2px -2px 0; border: 2px solid #8c8c8c !important; border-radius: 0 8px 8px 0; }
    .wave { width: 2466px; height: 280px; margin-top: 16px; }
    .note { font-size: 24px; margin: 18px 0 0; line-height: 28px; }

    .dock { left: 264px; top: 1678px; width: 2352px; height: 113px; border-radius: 36px; border: 2px solid rgba(190,195,205,.35); box-shadow: 0 0 0 1px rgba(20,20,20,.5);
      background: linear-gradient(180deg, rgba(255,255,255,0) 20%, rgba(255,255,255,.12)), linear-gradient(90deg, #6c686b 0, #6c686b 480px, #38506a 720px, #384f68 1750px, #2a3850 2000px, #232e48 2200px, #2a2a42 2352px);
      display: flex; padding: 15px 0 0 4.500px; }
    .di { width: 93.900px; height: 93px; display: flex; flex-direction: column; align-items: center; position: relative; flex: none; }
    .di i { width: 8px; height: 8px; border-radius: 50%; background: #e3eaf5; margin-top: 11px; }
    .badge { position: absolute; left: 59px; top: -9px; width: 34px; height: 34px; border-radius: 50%; background: #e9503f; color: #fff; font-size: 21px; display: flex; align-items: center; justify-content: center; letter-spacing: -.5px; }
    .ds { width: 2px; height: 84px; background: rgba(200,208,220,.55); margin: -3px 20.600px 0 20.600px; flex: none; }
    .ds.two { margin: -3px 18px 0 23px; }
    .defs { position: absolute; }
  `;

  private menubar() {
    const c = (w: number, body: TemplateResult) => html`<div class="cell" style="width:${w}px">${body}</div>`;
    return html`<div class="layer menubar sys">
      <div class="menus">
        ${ic(27, 32, svg`<path fill="#f2f2f5" d="M19 1q.5 4-2 6.500T12.500 9.500Q12.200 6 14.500 3.500T19 1zM25 11q-4 2.500-3.500 7T26 24q-2 6-5.500 7.500-2 .5-3.500-.5t-3-.8-3.500 1T6.500 31Q2 27.500 1 20q-.8-7 3.500-9.500 3-1.500 6 0t3.500 1.200 3-1.200Q21.500 8.500 25 11z"/>`)}
        <b>Chrome</b><span>파일</span><span>수정</span><span>보기</span><span>방문 기록</span><span>북마크</span><span>프로필</span><span>탭</span><span>창</span><span>도움말</span>
      </div>
      <div class="status">
        ${c(72, ic(30, 30, svg`<circle cx="15" cy="15" r="13.500" fill="none" stroke="#eee" stroke-width="2"/><path d="M15 1v12" stroke="#eee" stroke-width="2"/>`))}
        ${c(74, ic(30, 30, svg`<path d="M8 3.500A13.500 13.500 0 1 0 15 1.500v6" fill="none" stroke="#eee" stroke-width="2"/><path d="M5 6l12 10" stroke="#eee" stroke-width="3"/>`))}
        ${c(100, ic(38, 32, svg`<path d="M15 0a15 14 0 0 1 0 28q-5 0-8 3 0-5-2-6A15 14 0 0 1 15 0z" fill="#f4f4f6"/><circle cx="27" cy="20" r="10.500" fill="#e8573c"/><text x="22.500" y="24.500" font-size="12" font-weight="700" fill="#222">N</text>`))}
        ${c(36, ic(28, 28, svg`<circle cx="14" cy="14" r="12.500" fill="none" stroke="#eee" stroke-width="2.500"/><path d="M10 8.500v11l9-5.500z" fill="#eee"/>`))}
        ${c(104, ic(32, 32, svg`<rect width="32" height="32" rx="5" fill="#e9e9ee"/><text x="16" y="24" text-anchor="middle" font-size="23" fill="#22224a">A</text>`))}
        ${c(54, ic(50, 26, svg`<rect x="1" y="2" width="44" height="22" rx="6" fill="none" stroke="#9a9ab2" stroke-width="2"/><rect x="4" y="5" width="38" height="16" rx="3" fill="#eee"/><path d="M48 9v8" stroke="#9a9ab2" stroke-width="3"/><path d="M19 1v7M27 1v7M16 8h14v4q0 5-5 6v8h-4v-8q-5-1-5-6z" fill="#eee" stroke="#20204c" stroke-width="1.500"/>`))}
        ${c(102, ic(34, 24, svg`<g fill="none" stroke="#eee" stroke-width="4.200"><path d="M2 9Q17-5 32 9M8 15q9-8 18 0"/></g><path d="M12 18.500q5-4 10 0l-5 5z" fill="#eee"/>`))}
        ${c(34, ic(25, 28, svg`<circle cx="10" cy="11" r="8.500" fill="none" stroke="#eee" stroke-width="2.500"/><path d="M16 17l8 9" stroke="#eee" stroke-width="3"/>`))}
        ${c(96, ic(30, 28, svg`<rect x="1.500" y="1.500" width="27" height="10" rx="5" fill="none" stroke="#eee" stroke-width="2.400"/><circle cx="7" cy="6.500" r="4" fill="#eee"/><rect x="0" y="15" width="30" height="13" rx="6.500" fill="#eee"/><circle cx="23" cy="21.500" r="4" fill="#20204c"/>`))}
        ${c(26, ic(26, 26, svg`<circle cx="13" cy="13" r="13" fill="#2c2f62"/><path d="M2 8A13 13 0 0 1 22 4L13 13z" fill="#b8447e"/><path d="M22 4a13 13 0 0 1 0 18L13 13z" fill="#2f8aa6"/><path d="M13 13 21 3M13 13l12-2M13 13l2 12M13 13 3 17M13 13 9 6M13 13 7 22" stroke="#d8eef6" stroke-width="1.500"/>`))}
        <span class="sp"></span><span class="date">5월 10일 (월) 오전</span><span class="time">11:37</span>
      </div>
    </div>`;
  }

  private word() {
    const ret = ic(15, 16, svg`<path d="M13 2v6H2M6 3 1.500 8 6 13" fill="none" stroke="#6ab0f3" stroke-width="2"/>`);
    return html`<div class="layer word sys">
      <div class="wtitle">
        ${ic(28, 28, svg`<circle cx="11" cy="11" r="10" fill="none" stroke="#b5b5b5" stroke-width="2"/><path d="M18 18l9 9" stroke="#b5b5b5" stroke-width="2"/>`)}
        ${ic(31, 31, svg`<g fill="none" stroke="#b5b5b5" stroke-width="2"><circle cx="15.500" cy="15.500" r="14.500"/><path d="M8 19q7.500 9 15 0"/></g><circle cx="10" cy="11.500" r="2" fill="#b5b5b5"/><circle cx="21" cy="11.500" r="2" fill="#b5b5b5"/>`)}
      </div>
      <div class="wribbon">
        <div class="wbtn">${ic(24, 24, svg`<path d="M7 8H1v15h18v-7M6 18q1-9 11-10V3l6 7-6 7v-5q-7 0-11 6z" fill="none" stroke="#9b9b9b" stroke-width="1.800"/>`)}공유</div>
        <div class="wbtn">${ic(26, 24, svg`<path d="M1 1h24v16H13l-5 6v-6H1z" fill="none" stroke="#9b9b9b" stroke-width="1.800"/>`)}메모</div>
      </div>
      <div class="wdoc">
        <div class="frame"></div><div class="frame2"></div>
        ${STRIPS.map((s) => html`<wave-view class=${s.cls} .rows=${s.rows} .labels=${s.labels} .full=${s.full} .x0=${s.full - 5 * PITCH - 1} .count=${5} .lw=${2.6} .fs=${24}></wave-view>`)}
        ${[479, 629, 780, 934, 1087].map((y) => html`<div class="ret" style="top:${y}px">${ret}</div>`)}
        <div class="nub"></div>
      </div>
      <div class="wside"></div>
      <div class="hscroll"><i></i></div>
      <div class="wstatus"><div class="knob"></div><div class="track"></div>
        <div class="plus">${ic(16, 16, svg`<path d="M8 0v16M0 8h16" stroke="#fff" stroke-width="4"/>`)}</div>145%</div>
    </div>`;
  }

  private banner() {
    return html`<svg class="banner" viewBox="0 0 1072 80">
      <defs><linearGradient id="bb" x2="0" y2="1"><stop stop-color="#49a6de"/><stop offset="1" stop-color="#2f76a8"/></linearGradient></defs>
      <path d="M91 7q20 0 26 18 4 12 1 18L111 36Q112 14 91 7z" fill="#5badE2"/><path d="M70 60q2 12 13 17 20-2 28-19l-9 2q-6 7-13 8-5-2-7-8z" fill="#3f97d6"/>
      <path d="M16 32 27 14 38 32z" fill="#274a8e"/><path d="M22 30 27 20 32 30z" fill="#fff"/>
      <text x="39" y="33" font-family="Open Sans" font-weight="700" font-size="18" textLength="64" lengthAdjust="spacingAndGlyphs" fill="#274a8e">DOULOS</text>
      <path d="M14 38 122 36 118 58 11 61z" fill="#ee9a3c"/>
      <text x="17" y="56" font-family="Open Sans" font-weight="700" font-style="italic" font-size="19" textLength="99" lengthAdjust="spacingAndGlyphs" fill="#fff">WEBINARS</text>
      <rect x="143" y="4" width="714" height="72" rx="6" fill="url(#bb)"/>
      <g font-family="Open Sans" font-weight="700" font-size="30" fill="#fff">
        <text x="172" y="35" font-size="32" textLength="653" lengthAdjust="spacingAndGlyphs">Formal Verification for Non Specialists</text>
        <text x="199" y="68" textLength="74" lengthAdjust="spacingAndGlyphs">FREE</text>
        <g fill="#f3b16a"><text x="291" y="68">-</text><text x="323" y="68" textLength="246" lengthAdjust="spacingAndGlyphs">1 hour webinar</text><text x="584" y="68">-</text></g>
        <text x="611" y="68" textLength="189" lengthAdjust="spacingAndGlyphs">May 12, 2021</text>
      </g>
      <rect x="869" y="10" width="193" height="63" rx="5" fill="#f09d38" stroke="#b97f3d" stroke-width="3"/>
      <g font-family="Open Sans" font-weight="700" font-size="27" fill="#fdf6ea">
        <text x="900" y="39" textLength="126" lengthAdjust="spacingAndGlyphs">REGISTER</text><text x="926" y="63" textLength="73" lengthAdjust="spacingAndGlyphs">NOW</text>
      </g></svg>`;
  }

  private chrome() {
    const star = "M14 1l4 9.500 10 .8-7.600 6.600 2.300 10L14 22.500 5.300 27.900l2.300-10L0 11.300l10-.8z";
    return html`<div class="layer chrome">
      <div class="tabs sys">
        <div class="lights"><i class="r"></i><i class="y"></i><i class="g"></i></div>
        ${TABS.map((t) => html`<div class="tab ${t.active ? "on" : ""}">
          <div class="fav">${ic(32, 32, t.icon)}</div><div class="cap ${t.ko ? "ko" : ""}">${t.text}</div>
          ${t.active ? html`<div class="close">${ic(16, 16, svg`<path d="M1 1l14 14M15 1 1 15" stroke="#fff" stroke-width="3"/>`)}</div>` : nothing}
          ${t.sep ? html`<div class="line"></div>` : nothing}
        </div>`)}
        <div class="plusb">${ic(24, 24, svg`<path d="M12 0v24M0 12h24" stroke="#c4c6c9" stroke-width="3"/>`)}</div>
        <div class="chev">${ic(28, 28, svg`<circle cx="14" cy="14" r="14" fill="#c4c6c9"/><path d="M8 10h12l-6 8z" fill="#202124"/>`)}</div>
      </div>
      <div class="tool sys">
        <div class="cell" style="width:32px">${ic(26, 26, svg`<path d="M26 13H2M13 1 1.500 13 13 25" fill="none" stroke="#85878a" stroke-width="3"/>`)}</div>
        <div class="cell" style="width:95px">${ic(26, 26, svg`<path d="M0 13h24M13 1l11.500 12L13 25" fill="none" stroke="#85878a" stroke-width="3"/>`)}</div>
        <div class="cell" style="width:34px">${ic(27, 27, svg`<path d="M23 7A11.500 11.500 0 1 0 25 17" fill="none" stroke="#f1f1f2" stroke-width="3"/><path d="M26.500 0v11.500H15z" fill="#f1f1f2"/>`)}</div>
        <div class="omni">
          ${ic(17, 22, svg`<rect y="8" width="17" height="14" rx="2" fill="#e6e7e8"/><path d="M4 9V5.500a4.500 4.500 0 0 1 9 0V9" fill="none" stroke="#e6e7e8" stroke-width="2.400"/>`)}
          <p>edaplayground.com<span>/x/uqaR</span></p>
          <div class="star">${ic(28, 28, svg`<path d=${star} fill="none" stroke="#c6c8ca" stroke-width="2.600"/>`)}</div>
        </div>
        <div class="cell" style="width:40px">${ic(32, 28, svg`<path d="M2 12 16 0l14 12v4H2z" fill="#5f9a5c"/><path d="M0 11l16 11 16-11v14q0 3-3 3H3q-3 0-3-3z" fill="#8fc07f"/><path d="M3 6q0-2 2-2h22q2 0 2 2v9l-13 7-13-7z" fill="#fff"/><path d="M8 12l4 4 7-7M15 14l2 2 7-7" fill="none" stroke="#5a4fc0" stroke-width="2.200"/>`)}</div>
        <div class="cell" style="width:88px">${ic(32, 32, svg`<circle cx="16" cy="16" r="14.500" fill="#fff" stroke="#2e6f9e" stroke-width="3"/><path d="M15 6.500A9.500 9.500 0 0 0 13 25" fill="none" stroke="#b8403c" stroke-width="3"/><path d="M17 25.500A9.500 9.500 0 0 0 19 7" fill="none" stroke="#3c82b6" stroke-width="3"/>`)}</div>
        <div class="cell" style="width:40px">${ic(32, 32, svg`<path d="M9.500 0h13L32 9.500v13L22.500 32h-13L0 22.500v-13z" fill="#cf2e22"/><path d="M9 17V9q1.300-1.500 2.600 0v6V6q1.400-1.500 2.800 0v8V5q1.500-1.500 3 0v9V6.500q1.300-1.500 2.600 0V17l3-2.500q2-.5 1.600 1.500l-4 8.500q-1 2.500-4.600 2.500Q9 27 9 20z" fill="#fff"/>`)}</div>
        <div class="cell" style="width:90px">${ic(30, 30, svg`<path d="M1 8h8V5a4 4 0 0 1 8 0v3h7v8h2a4 4 0 0 1 0 8h-2v6h-7v-3a4 4 0 0 0-8 0v3H1v-8h2a4 4 0 0 0 0-8H1z" fill="#f0f1f2" transform="translate(0 -1.500)"/>`)}</div>
        <div class="cell" style="width:36px">${ic(44, 44, svg`<clipPath id="av"><circle cx="22" cy="22" r="22"/></clipPath><g clip-path="url(#av)"><circle cx="22" cy="22" r="22" fill="#7857b8"/><circle cx="22" cy="17" r="7" fill="#d6c9e9"/><ellipse cx="22" cy="40" rx="14.500" ry="12" fill="#d6c9e9"/></g>`)}</div>
        <div class="cell" style="width:92px">${ic(6, 28, svg`<g fill="#f0f1f2"><circle cx="3" cy="4" r="3"/><circle cx="3" cy="14" r="3"/><circle cx="3" cy="24" r="3"/></g>`)}</div>
      </div>
      <div class="nav">
        <svg class="logo" width="408" height="84" viewBox="0 0 408 84"><path d="M24 78Q7 76 7 60 7 48 22 43q2-12 14-14 0-26 26-26 20 0 24 22 4 8 2 14 26 0 41 12 4 12-4 20-4 7-16 7z" fill="#fff"/>
          <text x="24" y="69" font-family="Noto Sans" font-size="44" textLength="86" lengthAdjust="spacingAndGlyphs" fill="#173f7c">EDA</text>
          <text x="126" y="34" font-family="Open Sans" font-weight="700" font-size="38" textLength="233" lengthAdjust="spacingAndGlyphs" fill="#fff">playground</text></svg>
        <div class="btn run">${ic(24, 24, svg`<circle cx="12" cy="12" r="10.500" fill="none" stroke="#fff" stroke-width="3"/><path d="M9 6.500v11l9-5.500z" fill="#fff"/>`)}Run</div>
        <div class="btn save">${ic(24, 24, svg`<path d="M1 17 16 2l6 6L7 23H1z" fill="#fff"/><path d="M14 6l5 5" stroke="#4578b2" stroke-width="1.500"/><path d="M4 18l3 3" stroke="#4578b2" stroke-width="2"/>`)}Save<span class="ast">${star6}</span></div>
        <div class="btn copy">${ic(29, 28, svg`<path d="M8 7V2h8v5M8 2 2 8v12h8M2 8h6M18 8h9.500v18H12V14zM18 8v6h-6" fill="none" stroke="#fff" stroke-width="2.400"/>`)}Copy<span class="ast">${star6}</span></div>
        ${this.banner()}
        <div class="btn edit">${ic(36, 32, svg`<path d="M27 16v9q0 4-4 4H6q-4 0-4-4V9q0-4 4-4h12" fill="none" stroke="#fff" stroke-width="3"/><path d="M11 21v-6L27 0l6 6-16 15z" fill="#fff"/><path d="M14 17l12-11" stroke="#4578b2" stroke-width="1.500"/>`)}</div>
        <div class="btn help">${ic(32, 32, svg`<circle cx="16" cy="16" r="16" fill="#fff"/><text x="16" y="25.500" text-anchor="middle" font-family="Liberation Sans" font-weight="700" font-size="27" fill="#4578b2">?</text>`)}</div>
        <div class="btn play">${ic(27, 26, svg`<path d="M27 0q-1 12-9 17l-1 6-6 3-.5-6L6.500 16 0 15.500 3 9.500l6-1Q15 0 27 0z" fill="#fff"/><circle cx="20.500" cy="6.500" r="2" fill="#4578b2"/>`)}<span>Playgrounds</span><span class="car">${caret}</span></div>
        <div class="btn prof">${ic(28, 28, svg`<circle cx="14" cy="14" r="12.800" fill="none" stroke="#fff" stroke-width="2.400"/><circle cx="14" cy="11" r="6.500" fill="none" stroke="#fff" stroke-width="2"/><path d="M4 21q3-5 6-5 4 3 8 0 3 0 6 5-10 13-20 0z" fill="#fff"/>`)}<span>Profile</span><span class="car">${caret}</span></div>
      </div>
      <div class="page">
        <div class="backhead"></div>
        <div class="left">${ic(24, 1360, svg`<g transform="translate(0 -308)"><g fill="#17324a"><path d="M8 441h20l-10 11zM8 1020h20l-10 10zM8 1408l11 9-11 9zM8 1494h20l-10 10z"/></g>
          <path d="M14 468v21h10" fill="none" stroke="#17324a" stroke-width="3"/>
          <g fill="none" stroke="#353535" stroke-width="2"><rect x="10" y="565" width="40" height="38" rx="8"/><rect x="10" y="661" width="40" height="38" rx="8"/><rect x="10" y="757" width="40" height="96" rx="8"/><rect x="10" y="1065" width="40" height="38" rx="8"/><rect x="10" y="1154" width="40" height="37" rx="8"/><rect x="10" y="1242" width="40" height="36" rx="8"/><path d="M0 984h24M0 1379h24M0 1458h24M17 1173h10"/></g>
          <g fill="none" stroke="#1f1f1f" stroke-width="2"><rect x="10" y="875" width="24" height="24" rx="4"/><rect x="10" y="913" width="24" height="24" rx="4"/><rect x="10" y="947" width="24" height="24" rx="4"/><rect x="10" y="1341" width="24" height="24" rx="4"/><path d="M20 1249v16M20 1250h6M20 1257h6"/></g>
          <rect x="10" y="1297" width="28" height="25" rx="5" fill="#0e3478"/><path d="M14 1308l5 5 8-8" stroke="#999" stroke-width="2" fill="none"/></g>`)}</div>
        <div class="modal">
          <div class="mhead">EPWave
            <div class="min">${ic(20, 4, svg`<rect width="20" height="4" fill="#fff"/>`)}</div>${ic(20, 20, svg`<path d="M2 2l16 16M18 2 2 18" stroke="#fff" stroke-width="4"/>`)}</div>
          <div class="mbody"><div class="main">
            <div class="range"><label>From:</label><div class="in">0s</div><label class="b">To:</label><div class="in">272s</div></div>
            <div class="groups">
              <div class="grp"><div style="width:193px">Get Signals</div><div style="width:145px">Radix${ic(16, 9, svg`<path d="M0 0h16l-8 9z" fill="#333"/>`)}</div></div>
              <div class="grp"><div style="width:74px">${ic(26, 26, svg`<circle cx="11" cy="11" r="9" fill="none" stroke="#333" stroke-width="3.800"/><path d="M17 17l8 8" stroke="#333" stroke-width="4.500"/><path d="M11 6v10M6 11h10" stroke="#333" stroke-width="1.600"/>`)}</div>
                <div style="width:76px">${ic(26, 26, svg`<circle cx="11" cy="11" r="9" fill="none" stroke="#333" stroke-width="3.800"/><path d="M17 17l8 8" stroke="#333" stroke-width="4.500"/><path d="M6 11h10" stroke="#333" stroke-width="1.600"/>`)}</div><div style="width:123px">100%</div></div>
              <div class="grp act" style="width:155px"><div style="width:75px">${ic(25, 24, svg`<path d="M13 0v24L0 12zM25 0v24L12 12z" fill="#333"/>`)}</div><div class="pressed" style="width:78px">${ic(25, 24, svg`<path d="M0 0v24l13-12zM12 0v24l13-12z" fill="#333"/>`)}</div></div>
              <div class="grp" style="width:142px"><div style="width:138px">${ic(22, 22, svg`<path d="M22 0 12 22V12H0z" fill="#f5b04a"/>`)}<span>115s</span></div></div>
              <div class="grp off"><div style="width:76px">${ic(26, 16, svg`<path d="M2 14 13 3l11 11" fill="none" stroke="#858585" stroke-width="5"/>`)}</div><div style="width:78px">${ic(26, 16, svg`<path d="M2 2l11 11L24 2" fill="none" stroke="#858585" stroke-width="5"/>`)}</div><div style="width:72px">${ic(19, 19, svg`<path d="M2 2l15 15M17 2 2 17" fill="none" stroke="#ec837f" stroke-width="5.500"/>`)}</div></div>
            </div>
            <wave-view class="wave" .rows=${MAIN_ROWS} .labels=${{ 2: "110", 12: "120", 22: "130", 32: "140" }} .cursor=${682}></wave-view>
            <p class="note">Note: To revert to EPWave opening in a new browser window, set that option on your user page.</p>
          </div><div class="sb"><i></i></div></div>
        </div>
        <div class="right"></div>
      </div>
    </div>`;
  }

  private dock() {
    const item = (d: { art: TemplateResult; dot?: boolean; badge?: string }) => html`<div class="di">${ic(72, 72, d.art)}
      ${d.badge ? html`<span class="badge">${d.badge}</span>` : nothing}${d.dot ? html`<i></i>` : nothing}</div>`;
    return html`<div class="layer dock sys">
      ${DOCK_A.map(item)}<div class="ds"></div>${DOCK_B.map(item)}<div class="ds two"></div>${DOCK_C.map(item)}
    </div>`;
  }

  render() {
    return html`
      <svg class="defs" width="0" height="0"><defs>
        <linearGradient id="gBlue" x2="0" y2="1"><stop stop-color="#57c8fb"/><stop offset="1" stop-color="#2c6fee"/></linearGradient>
        <linearGradient id="gStore" x2="0" y2="1"><stop stop-color="#4db4f8"/><stop offset="1" stop-color="#2462da"/></linearGradient>
        <linearGradient id="gGray" x2="0" y2="1"><stop stop-color="#cfd8dc"/><stop offset="1" stop-color="#8c8c8c"/></linearGradient></defs></svg>
      <div class="layer w1 win"></div><div class="layer w2 win"></div><div class="layer w3 win"></div>
      <div class="layer bump"></div><div class="layer w4 win"></div>
      <div class="layer strip">
        <div class="paper" style="height:45px"></div>
        <div class="bar" style="height:3px"></div>
        <div class="dark" style="height:161px;padding-top:116px">f</div>
        <div class="bar" style="height:13px"></div>
        <div class="paper" style="height:284px">${ic(24, 284, svg`<g stroke="#d9322c" stroke-width="2"><path d="M0 45h5M0 60h15M0 72h5" /></g><g stroke="#4a4a4a" stroke-width="2" stroke-dasharray="3 1"><path d="M0 92h21M0 109h5M0 151h9M12 151h9M0 209h21"/></g>`)}</div>
        <div class="bar" style="height:15px"></div><div class="dark" style="height:89px"></div>
        <div class="paper" style="height:284px">${ic(24, 284, svg`<g stroke="#4a4a4a" stroke-width="2" stroke-dasharray="3 1"><path d="M0 55h10M0 69h21M0 75h20"/></g>`)}</div>
      </div>
      <div class="layer lower"><div class="sheet"><span>✓</span><span>En: Enable (1bit)</span></div></div>
      <div class="layer vsc sys"><div class="vbar"><span>Plain Text</span>
        ${ic(26, 26, svg`<g fill="none" stroke="#e6eef5" stroke-width="2"><circle cx="9" cy="12" r="5"/><path d="M1 25q0-8 8-8t8 8M8 3V1h17v14h-5l-3 3v-5"/></g>`)}
        <span class="gap"></span>${ic(24, 26, svg`<path d="M12 4q-8 0-8 9v5l-2 4h20l-2-4v-5M9 22q1 4 5 0" fill="none" stroke="#e6eef5" stroke-width="2"/><circle cx="18" cy="5" r="5.500" fill="#e6eef5"/>`)}</div></div>
      ${this.word()}
      <div class="layer glow"></div>
      ${this.chrome()}
      <div class="layer rim"></div>
      ${this.menubar()}
      ${this.dock()}`;
  }
}
